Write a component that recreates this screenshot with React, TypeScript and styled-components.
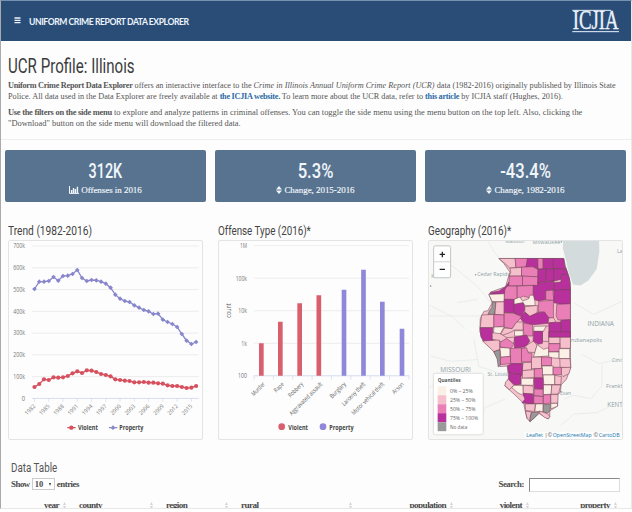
import React from "react";
import styled, { createGlobalStyle } from "styled-components";

const GlobalStyle = createGlobalStyle`
  * { box-sizing: border-box; }
  html, body { margin: 0; background: #fdfdfd; overflow: hidden; }
  body { font-family: "Liberation Serif", serif; color: #555; }
`;

const Page = styled.div`
  width: 632px;
  height: 512px;
  overflow: hidden;
  background: #fff;
`;
const Frame = styled.main`
  height: 509px;
  overflow: hidden;
  background: #fdfdfd;
  border: 1px solid #e8e8e8;
  border-top-color: #7890b0;
  border-left-color: #aaa;
`;
const Header = styled.header`
  display: flex;
  align-items: center;
  height: 40px;
  padding: 0 12px 0 13px;
  background: #2a4d78;
  color: #edf4fb;
`;
const MenuIcon = styled.svg`
  width: 7px;
  height: 7px;
  margin: -2px 8px 0 0;
`;
const Brand = styled.div`
  flex: 1;
  font: 700 8.6px/12px Lato, sans-serif;
  letter-spacing: -0.43px;
  white-space: nowrap;
  padding-top: 1px;
`;
const Logo = styled.svg`
  width: 47px;
  height: 24px;
  display: block;
  overflow: visible;
`;
const Intro = styled.section`
  height: 99px;
  padding: 14px 7px 0;
  border-bottom: 1px solid #eee;
`;
const Condensed = styled.span<{ $x: number; $center?: boolean }>`
  display: inline-block;
  white-space: nowrap;
  transform: scaleX(${(p) => p.$x});
  transform-origin: ${(p) => (p.$center ? "center" : "left")};
`;
const Title = styled.h1`
  margin: 0 0 1px;
  font: 400 19.6px/24px Roboto, sans-serif;
  color: #3c3c3c;
`;
const Paragraph = styled.p`
  margin: 0 0 5px;
  font-size: 9.2px;
  line-height: 11px;
  b, a { letter-spacing: -0.3px; }
`;
const Line = styled.span<{ $x: number }>`
  display: block;
  width: max-content;
  white-space: nowrap;
  transform: scaleX(${(p) => p.$x});
  transform-origin: left;
`;
const Link = styled.a`
  color: #2c6aa8;
  font-weight: 700;
`;
const Stats = styled.section`
  display: grid;
  grid-template-columns: repeat(3, 201px);
  gap: 9px;
  padding: 10px 4px 0;
`;
const Stat = styled.div`
  height: 52px;
  padding-top: 9px;
  border-radius: 2px;
  background: #58738f;
  color: #f1f6fb;
  text-align: center;
`;
const StatValue = styled.div`
  font: 500 20px/24px Roboto, sans-serif;
`;
const StatLabel = styled.div`
  display: flex;
  justify-content: center;
  align-items: center;
  gap: 2px;
  height: 14px;
  font-size: 9px;
  letter-spacing: -0.05px;
  -webkit-text-stroke: 0.15px #f1f6fb;
`;
const SmallIcon = styled.svg<{ $w: number }>`
  width: ${(p) => p.$w}px;
  height: 8px;
`;
const Panels = styled.section`
  display: grid;
  grid-template-columns: repeat(3, 195px);
  gap: 15px;
  padding: 19px 7px 0;
`;
const PanelTitle = styled.h2`
  margin: 0;
  font: 400 13.2px/19px Roboto, sans-serif;
  color: #444;
  height: 19px;
`;
const Card = styled.div`
  height: 200px;
  border: 1px solid #e4e4e4;
  border-radius: 2px;
  overflow: hidden;
`;
const Drawing = styled.svg`
  display: block;
  width: 195px;
  height: 200px;
  margin: -1px;
  font-family: "Open Sans", sans-serif;
`;
const TableArea = styled.section`
  padding: 18px 11px 0 10px;
`;
const TableTitle = styled.h2`
  margin: 0;
  height: 18px;
  font: 400 13.6px/18px Roboto, sans-serif;
  color: #555;
`;
const Controls = styled.div`
  display: flex;
  justify-content: space-between;
  align-items: center;
  height: 16px;
  font-size: 8.8px;
  font-weight: 700;
  letter-spacing: -0.45px;
  color: #4a4a4a;
`;
const Group = styled.label`
  display: flex;
  align-items: center;
  gap: 2px;
`;
const Picker = styled.span`
  display: flex;
  align-items: center;
  justify-content: space-between;
  width: 23px;
  height: 12px;
  padding: 0 3px 0 2px;
  border: 1px solid #ccc;
  background: #fff;
  font-size: 8.5px;
  letter-spacing: 0;
`;
const Caret = styled.i`
  border: 1.5px solid transparent;
  border-top: 3px solid #333;
  border-bottom: 0;
`;
const Search = styled.input`
  width: 91px;
  height: 14px;
  margin: 2px 0 0 3px;
  padding: 0 2px;
  border: 1px solid #ddd;
  border-top-color: #888;
  border-left-color: #888;
  background: #fff;
`;
const HeadRow = styled.div`
  display: grid;
  grid-template-columns: 58px 87px 75px 124px 101px 76px 88px;
  margin-top: 7px;
  height: 12px;
  border-bottom: 1px solid #ddd;
  font-size: 9.2px;
  line-height: 12px;
  letter-spacing: -0.6px;
  font-weight: 700;
  color: #4a4a4a;
`;
const HeadCell = styled.div<{ $right?: boolean }>`
  display: flex;
  align-items: center;
  justify-content: ${(p) => (p.$right ? "flex-end" : "space-between")};
  gap: 4px;
  padding: 0 3px 0 10px;
`;
const SortIcon = styled.svg`
  width: 3px;
  height: 7px;
  fill: #d4d4d4;
`;

const SortArrows = () => (
  <SmallIcon $w={6} viewBox="0 0 6 8"><path d="M0 3.4L3 0l3 3.4zM0 4.6h6L3 8z" fill="#f1f6fb" /></SmallIcon>
);
const BarsIcon = () => (
  <SmallIcon $w={10} viewBox="0 0 10 8">
    <path d="M.5 0v7.4H10" stroke="#f1f6fb" strokeWidth="1" fill="none" />
    <path d="M2.6 4v2.9M4.5 2v4.9M6.4 3v3.9M8.4.7v6.2" stroke="#f1f6fb" strokeWidth="1.4" fill="none" />
  </SmallIcon>
);

const PROPERTY = [164,142,142,140,128,139,125,124,119,107,131,140,137,138,142,148,160,181,193,200,203,213,220,227,231,239,238,256,263,269,278,299,319,329,323];
const VIOLENT = [458,449,435,437,429,430,429,425,417,411,416,408,409,413,419,422,426,435,437,439,440,444,444,443,445,445,447,448,453,455,455,458,461,460,455];
const xAt = (i: number) => 104.5 + i * 14.26;
const points = (ys: number[]) => ys.map((y, i) => `${xAt(i)},${y}`).join(" ");

const TrendChart = () => (
  <Drawing viewBox="25 17 585 600">
    {["700k", "600k", "500k", "400k", "300k", "200k", "100k", "0"].map((t, i) => (
      <g key={t}>
        <path d={`M97 ${35 + i * 65.3}H597`} stroke={i === 7 ? "#ccd6eb" : "#e9e9e9"} strokeWidth="2.5" />
        <text x="76" y={42 + i * 65.3} fontSize="19.5" fill="#777" textAnchor="end" textLength={i === 7 ? 10 : 35} lengthAdjust="spacingAndGlyphs">{t}</text>
      </g>
    ))}
    {Array.from({ length: 12 }, (_, i) => (
      <g key={i}>
        <path d={`M${xAt(i * 3)} 492v10`} stroke="#ccd6eb" strokeWidth="2" />
        <text transform={`translate(${xAt(i * 3) + 4} 517) rotate(-45)`} fontSize="17" fill="#777" textAnchor="end" textLength="37" lengthAdjust="spacingAndGlyphs">{1982 + i * 3}</text>
      </g>
    ))}
    <polyline points={points(PROPERTY)} fill="none" stroke="#8886cc" strokeWidth="4" />
    {PROPERTY.map((y, i) => <path key={i} d={`M${xAt(i)} ${y - 7}l7 7-7 7-7-7z`} fill="#8886cc" />)}
    <polyline points={points(VIOLENT)} fill="none" stroke="#d6505e" strokeWidth="4" />
    {VIOLENT.map((y, i) => <circle key={i} cx={xAt(i)} cy={y} r="6.3" fill="#d6505e" />)}
    <path d="M203 580h25" stroke="#d6505e" strokeWidth="4" /><circle cx="215" cy="580" r="6.5" fill="#d6505e" />
    <path d="M328 580h25" stroke="#8886cc" strokeWidth="4" /><path d="M340 573l7 7-7 7-7-7z" fill="#8886cc" />
    <text x="235" y="587" fontSize="20" fontWeight="700" fill="#444" textLength="60" lengthAdjust="spacingAndGlyphs">Violent</text>
    <text x="359" y="587" fontSize="20" fontWeight="700" fill="#444" textLength="72" lengthAdjust="spacingAndGlyphs">Property</text>
  </Drawing>
);

const OFFENSES: [string, number, number, number][] = [
  ["Murder", 149, 327, 49], ["Rape", 206, 262, 34], ["Robbery", 264, 207, 56], ["Aggravated assault", 321.5, 183, 132],
  ["Burglary", 397, 166, 60], ["Larceny theft", 455.5, 106, 92], ["Motor vehical theft", 512, 202, 130], ["Arson", 571, 283, 42],
];

const OffenseChart = () => (
  <Drawing viewBox="19 17 585 600">
    {["1M", "100k", "10k", "1k", "100"].map((t, i) => (
      <g key={t}>
        <path d={`M127 ${34 + i * 97.6}H592`} stroke={i === 4 ? "#ccd6eb" : "#e9e9e9"} strokeWidth="2.5" />
        <text x="106" y={42 + i * 97.6} fontSize="19.5" fill="#777" textAnchor="end" textLength={[21, 34, 26, 17, 27][i]} lengthAdjust="spacingAndGlyphs">{t}</text>
      </g>
    ))}
    {Array.from({ length: 9 }, (_, i) => <path key={i} d={`M${127 + i * 58.1} 424v12`} stroke="#ccd6eb" strokeWidth="2" />)}
    <text transform="translate(57 250) rotate(-90)" fontSize="19" fill="#555" textLength="43" lengthAdjust="spacingAndGlyphs">count</text>
    {OFFENSES.map(([name, x, y, len], i) => (
      <g key={name}>
        <path d={`M${x - 7} ${y}h14V424h-14z`} fill={i < 4 ? "#d85f6d" : "#8f88da"} />
        <text transform={`translate(${(i < 4 ? x : x - 5) + 12} 451) rotate(-45)`} fontSize="18.5" fill="#666" textAnchor="end" textLength={len} lengthAdjust="spacingAndGlyphs">{name}</text>
      </g>
    ))}
    <circle cx="210" cy="577" r="10" fill="#d85f6d" /><circle cx="334" cy="577" r="10" fill="#8f88da" />
    <text x="230" y="586" fontSize="20" fontWeight="700" fill="#444" textLength="59" lengthAdjust="spacingAndGlyphs">Violent</text>
    <text x="353" y="586" fontSize="20" fontWeight="700" fill="#444" textLength="73" lengthAdjust="spacingAndGlyphs">Property</text>
  </Drawing>
);

const TONES = { W: "#faf0e6", L: "#f5c0cb", M: "#ea7fb7", P: "#b8309b", G: "#999" };
type County = [keyof typeof TONES, string];

const NORTH: County[] = [
  ["L", "72,27 121,27 123,54 105,56 90,42"], ["M", "121,27 158,27 158,44 152,53 123,54"], ["P", "158,27 189,27 189,60 174,52 153,53"],
  ["M", "189,27 205,27 205,58 190,59"], ["P", "205,27 236,27 236,58 205,58"], ["P", "236,27 267,27 270,50 275,60 236,58"],
  ["L", "105,56 140,54 140,80 103,80 108,68"], ["M", "140,53 174,52 189,60 189,82 140,80"],
  ["M", "103,80 143,80 143,108 95,110 102,100"], ["M", "143,80 189,82 189,108 143,108"],
  ["P", "190,59 213,58 213,96 189,100"], ["P", "213,58 238,58 238,95 213,96"], ["P", "238,58 275,60 280,75 261,75 258,90 238,95"],
  ["P", "261,75 280,75 284,86 287,120 237,124 237,100 258,98"], ["P", "189,100 237,95 237,122 213,124 213,150 192,155 175,150 175,108 189,108"],
  ["P", "47,129 72,125 92,112 102,98 102,112 90,120 90,133 47,135"], ["M", "90,120 97,110 127,110 127,150 88,150"],
  ["M", "127,110 175,108 175,132 163,145 145,140 127,150"], ["W", "42,135 88,133 88,157 52,157"],
  ["G", "52,157 63,158 60,195 39,195 44,184 51,174"], ["L", "63,158 88,157 88,197 60,195"],
  ["P", "88,150 118,150 118,190 88,190"], ["W", "118,150 135,143 143,155 162,148 165,137 176,138 180,155 181,169 150,168 145,160 118,165"],
  ["M", "213,124 234,122 237,153 213,151"], ["P", "237,123 287,120 287,163 262,165 237,160"],
  ["M", "192,155 236,153 236,207 215,204 209,188 190,188"], ["M", "246,165 287,163 287,211 250,212 244,200"],
  ["P", "118,165 145,160 152,178 140,200 118,192"], ["L", "150,172 188,168 187,192 165,201 150,188"],
  ["P", "150,188 165,201 187,190 209,188 222,205 220,222 177,226 155,222 145,218 135,205"],
  ["L", "20,197 57,195 57,235 16,235"], ["M", "57,195 88,197 88,230 57,235"], ["M", "88,190 118,192 140,203 125,220 112,238 88,234"],
  ["L", "222,206 236,205 244,218 220,222"], ["P", "15,235 53,235 55,275 40,278 27,275 18,263"],
  ["W", "57,233 88,232 78,250 73,262 56,258"], ["L", "88,236 112,238 125,218 145,218 145,242 119,242 105,250 75,260"],
  ["M", "145,221 173,226 174,260 147,260"], ["W", "177,231 215,230 210,246 177,246"], ["W", "119,244 145,244 145,260 119,260"],
  ["P", "222,220 258,218 258,260 222,262"], ["P", "258,213 287,211 287,262 258,262"], ["L", "215,230 222,230 222,277 203,276 203,250"],
];
const SOUTH: County[] = [
  ["L", "52,-5 76,-2 96,10 120,8 115,30 73,20 52,15"], ["P", "119,8 155,2 165,20 153,38 119,41"], ["P", "176,-9 203,-9 203,27 190,30 175,20"],
  ["P", "222,-8 287,-8 287,9 222,9"], ["L", "23,20 73,17 75,45 57,52"], ["W", "75,40 105,40 105,67 78,69"],
  ["M", "95,12 119,30 107,42 75,38 77,23"], ["M", "107,42 140,41 142,88 107,88"], ["L", "150,37 175,20 187,33 180,55 145,52"],
  ["M", "140,43 155,40 160,55 172,58 170,83 140,83"], ["W", "187,31 206,45 222,40 222,65 176,68"],
  ["L", "222,9 256,9 256,28 222,28"], ["L", "256,9 287,9 287,42 256,42"], ["M", "222,28 255,28 255,52 222,53"],
  ["G", "57,52 75,47 77,92 70,98 67,75"], ["M", "77,69 107,66 107,88 77,91"], ["W", "222,53 253,53 253,72 222,70"],
  ["W", "253,43 285,43 285,73 253,73"], ["L", "145,85 170,84 170,107 142,109"], ["L", "170,69 200,68 200,103 170,103"],
  ["M", "200,68 230,69 230,94 200,94"], ["P", "98,94 110,88 143,88 143,118 137,130 120,118 101,116"],
  ["W", "202,95 235,95 235,122 202,122"], ["M", "235,99 260,99 260,121 235,121"], ["L", "255,73 286,73 288,100 256,99"],
  ["L", "260,100 288,99 283,118 265,127 260,122"], ["M", "178,104 203,102 203,130 178,130"],
  ["P", "102,117 138,120 138,150 120,153 102,137"], ["L", "143,109 178,106 178,130 143,132"],
  ["W", "139,132 176,132 176,153 139,153"], ["P", "178,131 206,131 206,165 178,163"], ["W", "205,122 240,122 240,151 207,151"],
  ["L", "240,123 260,127 258,151 240,151"], ["L", "101,135 117,153 104,166 90,155 92,143"],
  ["W", "118,153 145,154 146,184 129,176 111,160"], ["L", "145,153 175,155 177,179 145,178"],
  ["M", "178,165 205,165 205,187 178,184"], ["W", "206,152 231,152 229,180 206,181"], ["L", "231,152 258,152 251,179 229,180"],
  ["P", "144,177 176,180 176,209 141,206 150,195"], ["M", "177,185 205,187 205,208 177,208"], ["M", "206,182 227,181 227,207 206,208"],
  ["L", "228,181 250,181 249,207 228,207"], ["L", "151,209 182,209 179,232 152,229"], ["W", "183,209 205,209 205,233 180,231"],
  ["G", "206,211 228,210 225,230 217,238 205,232"], ["W", "228,208 248,207 248,216 228,224"],
  ["L", "152,231 170,233 166,251 166,262 157,253"], ["G", "170,235 193,234 177,253 165,262 166,250"],
  ["L", "193,230 217,238 225,247 221,254 210,250 195,238"],
];
const OUTLINE = "225,72 420,72 425,95 433,120 440,145 440,370 441,398 428,435 412,452 410,474 400,482 402,515 378,530 378,547 373,554 346,538 319,562 309,552 304,530 300,508 270,479 243,455 254,432 250,395 228,397 220,370 205,345 177,320 168,292 169,253 180,231 192,229 205,205 195,180 200,173 245,157 258,113 240,87";

const Counties = ({ data, shift }: { data: County[]; shift: number }) => (
  <g transform={`translate(153 ${shift})`} stroke="#6d4052" strokeWidth="1.6" strokeLinejoin="round">
    {data.map(([tone, pts], i) => <polygon key={i} points={pts} fill={TONES[tone]} />)}
  </g>
);

const LABELS: [string, number, number, number, number][] = [
  ["Madison", 244, 26, 58, 15], ["Milwaukee", 326, 29, 84, 15], ["La", 580, 56, 17, 15], ["Cedar Rapids", 160, 126, 98, 18],
  ["INDIANA", 491, 275, 80, 19], ["Indianapolis", 437, 324, 98, 16], ["MISSOURI", 49, 414, 92, 19], ["St. Louis", 191, 426, 60, 18],
  ["Cinc", 564, 384, 33, 16], ["Frankf", 547, 462, 50, 16], ["KENT", 551, 518, 46, 19], ["Evan", 409, 482, 33, 15], ["Kansas", 22, 131, 48, 14],
];

const IllinoisMap = () => (
  <Drawing viewBox="12 17 586 600">
    <path d="M12 17h586v600H12z" fill="#f8f8f7" />
    <path d="M418 17h108l1 35-8 52-25 34-24 15-22-3-13-34-9-42-9-32z" fill="#d3dbdc" />
    <path d="M190 17l20 34 20 25M60 75l45 35 60 50 35 45M12 245h160M100 205l60-10M12 210l70 35 42 38M450 205l60 35 88-40M475 360l50 28 70-15M535 390v65l-34 38-50-10-30 12M20 365l60 16 80-5M150 315l15 82 75 23M165 580l18-60 60-25M410 575l40-35 70-5 78-37M30 450l-18 15" fill="none" stroke="#eaecec" strokeWidth="3" />
    <g stroke="#f8f8f7" strokeWidth="3" paintOrder="stroke" fill="#8f9fa6">
      {LABELS.map(([t, x, y, len, size]) => <text key={t} x={x} y={y} fontSize={size} textLength={len} lengthAdjust="spacingAndGlyphs">{t}</text>)}
    </g>
    <g fill="#8f9fa6"><circle cx="155" cy="121" r="2.5" /><circle cx="413" cy="22" r="2.5" /><circle cx="20" cy="155" r="2.5" /></g>
    <polygon points={OUTLINE} fill="#f5c0cb" stroke="#806070" strokeWidth="2" />
    <Counties data={NORTH} shift={45} />
    <Counties data={SOUTH} shift={300} />
    <rect x="29" y="34" width="51" height="96" rx="5" fill="#fff" stroke="#c4c4c4" strokeWidth="3" />
    <path d="M30 82h49" stroke="#ccc" strokeWidth="2.5" />
    <path d="M47 60h16M55 52v16M47 105h16" stroke="#222" strokeWidth="3.8" />
    <rect x="28" y="417" width="150" height="185" rx="6" fill="#fff" stroke="#dedede" strokeWidth="3" />
    <text x="41" y="444" fontSize="16" fontWeight="700" fill="#555" textLength="69" lengthAdjust="spacingAndGlyphs">Quantiles</text>
    {(["W", "L", "M", "P", "G"] as const).map((tone, i) => (
      <g key={tone}>
        <rect x="41" y={456 + i * 27} width="26" height="27" fill={TONES[tone]} />
        <text x="78" y={475 + i * 27} fontSize="16" fill="#666" textLength={[69, 77, 77, 85, 52][i]} lengthAdjust="spacingAndGlyphs">
          {["0% – 25%", "25% – 50%", "50% – 75%", "75% – 100%", "No data"][i]}
        </text>
      </g>
    ))}
    <path d="M303 593h295v24H303z" fill="#fff" fillOpacity=".75" />
    <g fontSize="17" fill="#1878ae">
      <text x="307" y="609" textLength="50" lengthAdjust="spacingAndGlyphs">Leaflet</text>
      <text x="362" y="609" fill="#555">|</text><text x="371" y="609" fill="#555">©</text>
      <text x="387" y="609" textLength="117" lengthAdjust="spacingAndGlyphs">OpenStreetMap</text>
      <text x="509" y="609" fill="#555">©</text>
      <text x="525" y="609" textLength="63" lengthAdjust="spacingAndGlyphs">CartoDB</text>
    </g>
  </Drawing>
);

const COLUMNS: [string, boolean][] = [["year", true], ["county", false], ["region", false], ["rural", false], ["population", true], ["violent", true], ["property", true]];

export default function App() {
  return (
    <Page>
      <GlobalStyle />
      <Frame>
        <Header>
          <MenuIcon viewBox="0 0 7 7"><path d="M.5 1h6M.5 3.3h6M.5 5.6h6" stroke="#edf4fb" strokeWidth="1.3" /></MenuIcon>
          <Brand>UNIFORM CRIME REPORT DATA EXPLORER</Brand>
          <Logo viewBox="0 0 141 72">
            <path d="M1 4h116M1 68h140" stroke="#eaf2fa" strokeWidth="3" />
            <text x="2" y="60" fontSize="79" fontFamily="Liberation Serif, serif" fill="#eaf2fa" stroke="#eaf2fa" strokeWidth="1" textLength="138" lengthAdjust="spacingAndGlyphs">ICJIA</text>
          </Logo>
        </Header>
        <Intro>
          <Title><Condensed $x={0.77}>UCR Profile: Illinois</Condensed></Title>
          <Paragraph>
            <Line $x={0.895}><b>Uniform Crime Report Data Explorer</b> offers an interactive interface to the <i>Crime in Illinois Annual Uniform Crime Report (UCR)</i> data (1982-2016) originally published by Illinois State</Line>
            <Line $x={0.895}>Police. All data used in the Data Explorer are freely available at <Link>the ICJIA website.</Link> To learn more about the UCR data, refer to <Link>this article</Link> by ICJIA staff (Hughes, 2016).</Line>
          </Paragraph>
          <Paragraph>
            <Line $x={0.92}><b>Use the filters on the side menu</b> to explore and analyze patterns in criminal offenses. You can toggle the side menu using the menu button on the top left. Also, clicking the</Line>
            <Line $x={0.917}>"Download" button on the side menu will download the filtered data.</Line>
          </Paragraph>
        </Intro>
        <Stats>
          <Stat><StatValue><Condensed $x={0.72} $center>312K</Condensed></StatValue><StatLabel><BarsIcon />Offenses in 2016</StatLabel></Stat>
          <Stat><StatValue><Condensed $x={0.83} $center>5.3%</Condensed></StatValue><StatLabel><SortArrows />Change, 2015-2016</StatLabel></Stat>
          <Stat><StatValue><Condensed $x={0.83} $center>-43.4%</Condensed></StatValue><StatLabel><SortArrows />Change, 1982-2016</StatLabel></Stat>
        </Stats>
        <Panels>
          <div><PanelTitle><Condensed $x={0.773}>Trend (1982-2016)</Condensed></PanelTitle><Card><TrendChart /></Card></div>
          <div><PanelTitle><Condensed $x={0.743}>Offense Type (2016)*</Condensed></PanelTitle><Card><OffenseChart /></Card></div>
          <div><PanelTitle><Condensed $x={0.75}>Geography (2016)*</Condensed></PanelTitle><Card><IllinoisMap /></Card></div>
        </Panels>
        <TableArea>
          <TableTitle><Condensed $x={0.72}>Data Table</Condensed></TableTitle>
          <Controls>
            <Group>Show <Picker>10 <Caret /></Picker> entries</Group>
            <Group>Search: <Search aria-label="Search" /></Group>
          </Controls>
          <HeadRow>
            {COLUMNS.map(([name, right]) => (
              <HeadCell key={name} $right={right}>{name}<SortIcon viewBox="0 0 3 7"><path d="M0 3l1.5-3L3 3zM0 4h3L1.5 7z" /></SortIcon></HeadCell>
            ))}
          </HeadRow>
        </TableArea>
      </Frame>
    </Page>
  );
}
